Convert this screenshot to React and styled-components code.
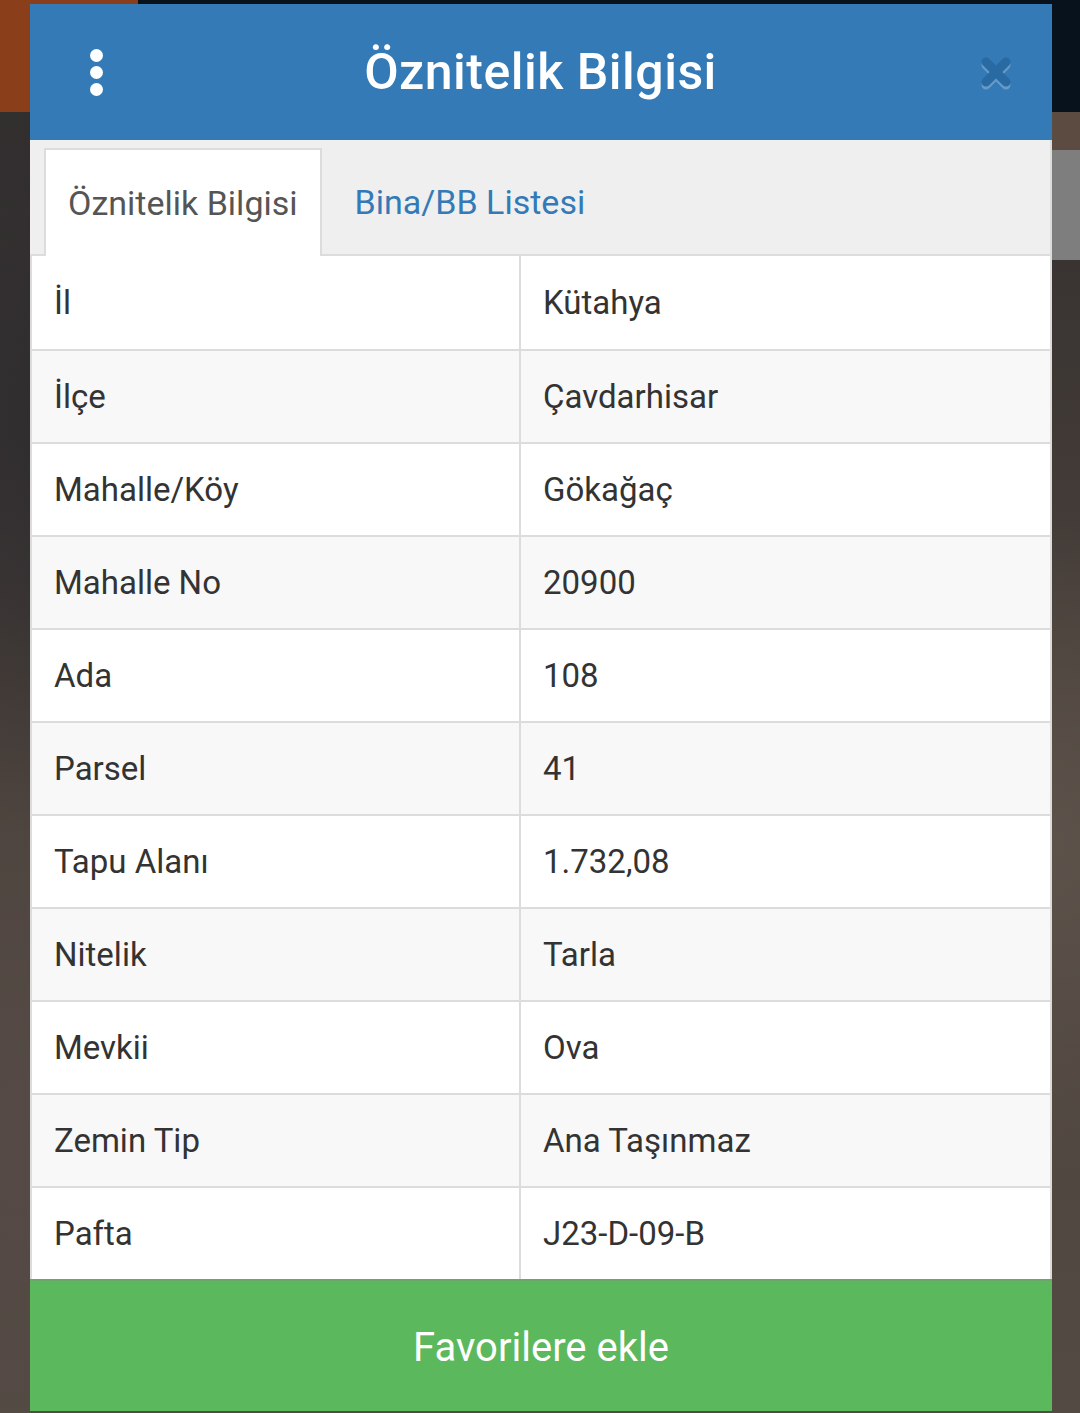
import React from 'react'
import styled, { createGlobalStyle } from 'styled-components'

const GlobalStyle = createGlobalStyle`
    html, body {
        margin: 0;
        padding: 0;
    }
    body {
        font-family: Roboto, "Noto Sans", "Liberation Sans", sans-serif;
        min-height: 1413px;
        background-color: #47403b;
        background-image:
            linear-gradient(#8a3e19, #8a3e19),
            linear-gradient(#07121c, #07121c),
            linear-gradient(#5b4b40, #5b4b40),
            linear-gradient(#7e7e7e, #7e7e7e),
            radial-gradient(circle at 10% 30%, #2d2b2e 0, transparent 30%),
            radial-gradient(circle at 95% 60%, #5d534b 0, transparent 25%),
            radial-gradient(circle at 5% 80%, #554a45 0, transparent 30%),
            linear-gradient(180deg, #2f2c2d 0%, #4a413b 50%, #544a44 100%);
        background-size:
            138px 112px,
            942px 112px,
            28px 38px,
            28px 110px,
            100% 100%,
            100% 100%,
            100% 100%,
            100% 100%;
        background-position:
            0 0,
            138px 0,
            1052px 112px,
            1052px 150px,
            0 0,
            0 0,
            0 0,
            0 0;
        background-repeat: no-repeat;
    }
`

const Modal = styled.div`
    margin: 4px 28px 0 30px;
    width: 1022px;
    display: flex;
    flex-direction: column;
`

const Header = styled.div`
    height: 136px;
    background: #337ab7;
    display: flex;
    align-items: center;
    justify-content: space-between;
    padding: 0 38px 0 60px;
`

const MenuDots = styled.div`
    display: flex;
    flex-direction: column;
    gap: 4px;
    span {
        width: 13px;
        height: 13px;
        border-radius: 50%;
        background: #fff;
    }
`

const Title = styled.h1`
    margin: 0;
    color: #fff;
    font-size: 50px;
    font-weight: 500;
    letter-spacing: 0.5px;
`

const CloseButton = styled.div`
    width: 36px;
    height: 36px;
    filter: drop-shadow(0 3px 0 rgba(255, 255, 255, 0.25));
`

const TabBar = styled.div`
    background: #efefef;
    height: 116px;
    display: flex;
    align-items: flex-end;
    padding-left: 14px;
    border-bottom: 2px solid #dcdcdc;
    border-right: 2px solid #dcdcdc;
    box-sizing: border-box;
`

const Tab = styled.div`
    box-sizing: border-box;
    display: flex;
    align-items: center;
    padding: 0 ${props => props.$active ? '22px' : '31px'};
    font-size: 34px;
    color: ${props => props.$active ? '#555' : '#337ab7'};
    background: ${props => props.$active ? '#fff' : 'transparent'};
    border: 2px solid ${props => props.$active ? '#dcdcdc' : 'transparent'};
    border-bottom: none;
    margin-bottom: ${props => props.$active ? '-2px' : '0'};
    height: ${props => props.$active ? '108px' : '106px'};
`

const Table = styled.div`
    display: flex;
    flex-direction: column;
    border-right: 2px solid #dcdcdc;
    border-left: 2px solid #dcdcdc;
`

const Row = styled.div`
    display: grid;
    grid-template-columns: 487px 1fr;
    height: 93px;
    box-sizing: border-box;
    border-top: 2px solid #dcdcdc;
    background: ${props => props.$striped ? '#f8f8f8' : '#fff'};
    &:first-child {
        border-top: none;
        height: 93px;
    }
`

const Cell = styled.div`
    display: flex;
    align-items: center;
    padding-left: 22px;
    font-size: 33px;
    color: #333;
    & + & {
        border-left: 2px solid #dcdcdc;
    }
`

const FavButton = styled.button`
    border: none;
    border-top: 2px solid #6aa86a;
    background: #5cb85c;
    color: #fff;
    height: 132px;
    font-family: inherit;
    font-size: 40px;
    cursor: pointer;
    padding: 2px 0 0;
`

const rows = [
    ['İl', 'Kütahya'],
    ['İlçe', 'Çavdarhisar'],
    ['Mahalle/Köy', 'Gökağaç'],
    ['Mahalle No', '20900'],
    ['Ada', '108'],
    ['Parsel', '41'],
    ['Tapu Alanı', '1.732,08'],
    ['Nitelik', 'Tarla'],
    ['Mevkii', 'Ova'],
    ['Zemin Tip', 'Ana Taşınmaz'],
    ['Pafta', 'J23-D-09-B'],
]

const App = () => (
    <>
        <GlobalStyle />
        <Modal>
            <Header>
                <MenuDots><span /><span /><span /></MenuDots>
                <Title>Öznitelik Bilgisi</Title>
                <CloseButton>
                    <svg viewBox="0 0 36 36" width="36" height="36">
                        <path d="M8 8 L28 28 M28 8 L8 28" stroke="#2a6aa3" strokeWidth="9" strokeLinecap="round" />
                    </svg>
                </CloseButton>
            </Header>
            <TabBar>
                <Tab $active>Öznitelik Bilgisi</Tab>
                <Tab>Bina/BB Listesi</Tab>
            </TabBar>
            <Table>
                {rows.map(([label, value], i) => (
                    <Row key={label} $striped={i % 2 === 1}>
                        <Cell>{label}</Cell>
                        <Cell>{value}</Cell>
                    </Row>
                ))}
            </Table>
            <FavButton>Favorilere ekle</FavButton>
        </Modal>
    </>
)

export default App
